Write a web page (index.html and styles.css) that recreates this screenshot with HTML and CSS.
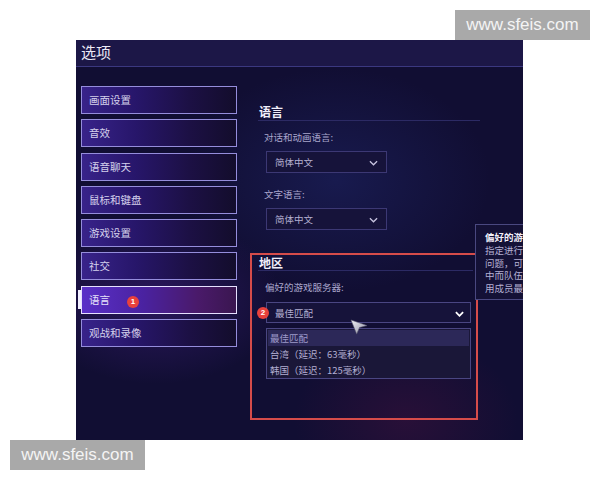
FILE: index.html
```html
<!DOCTYPE html>
<html lang="zh">
<head>
<meta charset="utf-8">
<title>选项</title>
<link rel="stylesheet" href="styles.css">
</head>
<body>
<div class="wm wm-top">www.sfeis.com</div>
<div class="frame">
  <div class="titlebar">选项</div>
  <div class="main">
    <div class="sidebar">
      <div class="item">画面设置</div>
      <div class="item">音效</div>
      <div class="item">语音聊天</div>
      <div class="item">鼠标和键盘</div>
      <div class="item">游戏设置</div>
      <div class="item">社交</div>
      <div class="item active">语言<span class="badge b1">1</span></div>
      <div class="item">观战和录像</div>
    </div>
    <div class="content">
      <div class="section">
        <div class="heading">语言</div>
        <div class="label">对话和动画语言:</div>
        <div class="select small"><span>简体中文</span><svg class="chev" viewBox="0 0 10 6"><path d="M1 1 L5 5 L9 1" /></svg></div>
        <div class="label l2">文字语言:</div>
        <div class="select small"><span>简体中文</span><svg class="chev" viewBox="0 0 10 6"><path d="M1 1 L5 5 L9 1" /></svg></div>
      </div>
      <div class="redbox">
        <div class="heading h2">地区</div>
        <div class="label l3">偏好的游戏服务器:</div>
        <div class="select wide"><span class="badge b2">2</span><span>最佳匹配</span><svg class="chev bold" viewBox="0 0 10 6"><path d="M1 1 L5 5 L9 1" /></svg></div>
        <div class="list">
          <div class="opt sel">最佳匹配</div>
          <div class="opt">台湾（延迟：63毫秒）</div>
          <div class="opt">韩国（延迟：125毫秒）</div>
        </div>
      </div>
    </div>
  </div>
  <div class="tooltip">
    <div class="tt-title">偏好的游戏服务器</div>
    <div class="tt-line">指定进行匹配的服务器。</div>
    <div class="tt-line">问题，可以尝试更换。</div>
    <div class="tt-line">中而队伍成员所在地区</div>
    <div class="tt-line">用成员最多的服务器。</div>
  </div>
  <svg class="cursor" viewBox="0 0 20 18"><defs><linearGradient id="cg" x1="0" y1="0" x2="1" y2="1"><stop offset="0" stop-color="#f2f2f6"/><stop offset="1" stop-color="#8c8ca0"/></linearGradient></defs><path d="M1 1 L18 7 L10 9 L7 16 Z" fill="url(#cg)" stroke="#5a5870" stroke-width="0.6"/></svg>
</div>
<div class="wm wm-bottom">www.sfeis.com</div>
</body>
</html>
```
FILE: styles.css
```css
html, body {
  margin: 0;
  padding: 0;
  background: #ffffff;
}
body {
  width: 600px;
  height: 480px;
  position: relative;
  overflow: hidden;
  font-family: "Noto Sans CJK SC", "Noto Sans", sans-serif;
  padding-top: 40px;
  box-sizing: border-box;
}
.wm {
  position: absolute;
  background: #a9a9a9;
  color: #f4f4f4;
  font-family: "Liberation Sans", Arial, sans-serif;
  font-size: 17px;
  height: 30px;
  line-height: 30px;
  width: 135px;
  text-align: center;
  z-index: 5;
}
.wm-top { left: 455px; top: 10px; }
.wm-bottom { left: 10px; top: 440px; }

.frame {
  margin-left: 76px;
  width: 447px;
  height: 400px;
  position: relative;
  overflow: hidden;
  background:
    radial-gradient(ellipse 180px 120px at 80px 260px, rgba(90, 40, 170, 0.35), transparent 70%),
    radial-gradient(ellipse 160px 120px at 330px 380px, rgba(110, 20, 70, 0.25), transparent 70%),
    radial-gradient(ellipse 220px 160px at 260px 140px, rgba(35, 45, 120, 0.4), transparent 70%),
    #110e33;
}
.titlebar {
  height: 26px;
  line-height: 24px;
  background: #1c1747;
  border-bottom: 1px solid #3b3880;
  color: #eceaf8;
  font-size: 15px;
  padding-left: 5px;
}
.main {
  display: flex;
  padding: 19px 0 0 5px;
}
.sidebar {
  width: 156px;
  display: flex;
  flex-direction: column;
  gap: 5.3px;
}
.item {
  position: relative;
  height: 28px;
  box-sizing: border-box;
  border: 1.5px solid #958ddc;
  background: linear-gradient(90deg, #38238a 0%, #27166a 35%, #1c1044 70%, #130d2c 100%);
  color: #d4d0ec;
  font-size: 10.5px;
  line-height: 25px;
  padding-left: 7px;
}
.item.active {
  border-color: #e6e0ff;
  background: linear-gradient(90deg, #5a30c8 0%, #4a22a0 40%, #4a1a6a 75%, #3a1650 100%);
  color: #e6e2fa;
}
.item.active::before {
  content: "";
  position: absolute;
  left: -4px;
  top: 3px;
  width: 3px;
  height: 19px;
  background: #f2f0ff;
}
.badge {
  display: inline-block;
  width: 12px;
  height: 12px;
  border-radius: 50%;
  background: #e8413c;
  color: #fff;
  font-family: "Liberation Sans", Arial, sans-serif;
  font-size: 8px;
  font-weight: bold;
  line-height: 12px;
  text-align: center;
}
.b1 {
  margin-left: 17px;
  vertical-align: 0;
}
.content {
  margin-left: 13px;
  display: flex;
  flex-direction: column;
}
.section {
  padding-left: 8px;
  width: 222px;
}
.heading {
  margin-top: 18px;
  height: 16px;
  line-height: 16px;
  font-size: 12px;
  font-weight: bold;
  color: #f0eefa;
  border-bottom: 1px solid #2c2a64;
  padding-left: 1px;
}
.label {
  margin-top: 9px;
  height: 14px;
  line-height: 14px;
  font-size: 9.5px;
  color: #aaa6cc;
  padding-left: 6px;
}
.label.l2 { margin-top: 14px; }
.select {
  position: relative;
  box-sizing: border-box;
  height: 22px;
  margin-top: 7px;
  margin-left: 8px;
  background: #16133a;
  border: 1px solid #3c3874;
  display: flex;
  align-items: center;
  padding-left: 8px;
  font-size: 9.5px;
  color: #b4b0d2;
}
.select.small { width: 121px; }
.chev {
  position: absolute;
  right: 8px;
  top: 8px;
  width: 9px;
  height: 6px;
  fill: none;
  stroke: #c8c4e0;
  stroke-width: 1.4;
}
.chev.bold {
  stroke: #ffffff;
  stroke-width: 2;
  right: 6px;
}
.redbox {
  margin-top: 23px;
  width: 228px;
  height: 167px;
  box-sizing: border-box;
  border: 2px solid #d64c4a;
  display: flex;
  flex-direction: column;
}
.heading.h2 {
  margin-top: 0;
  margin-left: 6px;
  width: 215px;
  box-sizing: border-box;
}
.label.l3 { margin-left: 7px; padding-left: 6px; }
.select.wide {
  width: 205px;
  height: 21px;
  margin-left: 14px;
  margin-top: 8px;
  border-color: #4a4682;
  padding-left: 8px;
}
.b2 {
  position: absolute;
  left: -10px;
  top: 4px;
}
.list {
  margin-top: 5px;
  margin-left: 14px;
  width: 205px;
  height: 51px;
  box-sizing: border-box;
  border: 1px solid #4a4682;
  background: #1a1738;
  padding: 1px 1px 0 1px;
  display: flex;
  flex-direction: column;
}
.opt {
  height: 16px;
  line-height: 16px;
  font-size: 9.5px;
  color: #b2aed2;
  padding-left: 2px;
}
.opt.sel {
  background: #2c2858;
  color: #9e9aca;
}
.tooltip {
  position: absolute;
  left: 399px;
  top: 184px;
  width: 70px;
  height: 76px;
  box-sizing: border-box;
  border: 1px solid #4a4880;
  background: #141136;
  padding: 6px 0 0 9px;
  white-space: nowrap;
}
.tt-title {
  font-size: 9.5px;
  font-weight: bold;
  color: #f2f0fa;
  line-height: 13px;
}
.tt-line {
  font-size: 9.5px;
  color: #b4b0d4;
  line-height: 12.5px;
}
.cursor {
  position: absolute;
  left: 274px;
  top: 279px;
  width: 19px;
  height: 17px;
}
```
